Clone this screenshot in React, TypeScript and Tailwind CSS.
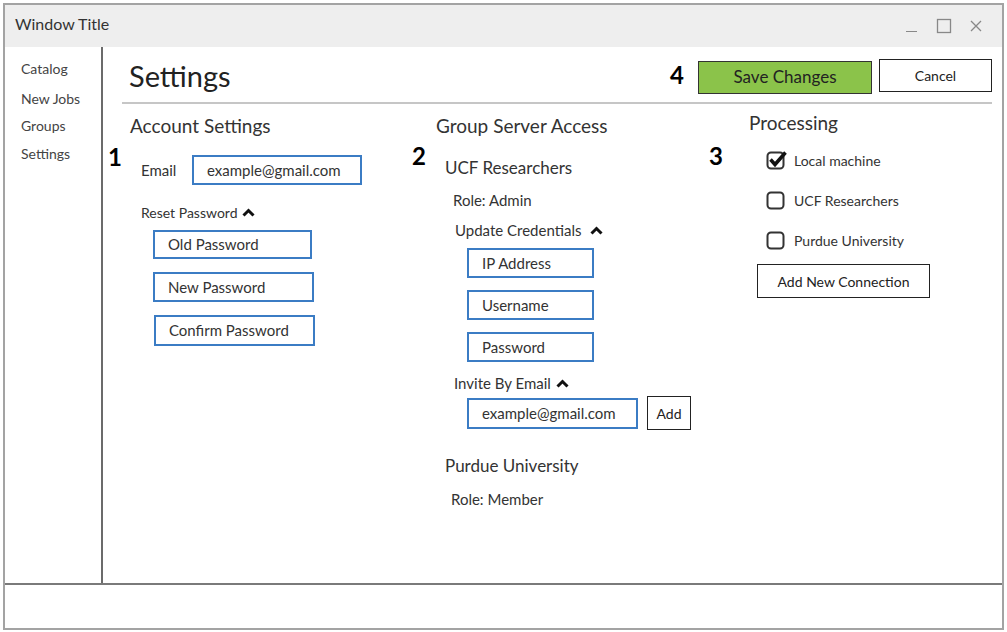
import React from 'react';

const font = { fontFamily: 'Lato, "Open Sans", sans-serif' };

function Chevron({ gap = 'ml-[5px]' }: { gap?: string }) {
  return (
    <svg width="13" height="9" viewBox="0 0 13 9" className={`${gap} inline-block`}>
      <polyline points="1.5,7.5 6.5,2.5 11.5,7.5" fill="none" stroke="#111" strokeWidth="3" />
    </svg>
  );
}

function Field({ label, w, h = 'h-[29px]' }: { label: string; w: string; h?: string }) {
  return (
    <div className={`${w} ${h} border-2 border-[#3b7cc4] flex items-center pl-[13px] text-[15px] text-[#333]`}>
      {label}
    </div>
  );
}

function Check({ checked, label }: { checked?: boolean; label: string }) {
  return (
    <div className="flex items-center h-[20px]">
      <svg width="22" height="22" viewBox="0 0 22 22" className="-ml-[1px]">
        <rect x="1.5" y="3.5" width="16" height="16" rx="3.5" fill="none" stroke="#333" strokeWidth="2" />
        {checked && (
          <polyline points="4.5,10.5 9,15.5 19.5,3.5" fill="none" stroke="#111" strokeWidth="3.5" strokeLinejoin="miter" />
        )}
      </svg>
      <span className="ml-[6px] text-[14px] text-[#333]">{label}</span>
    </div>
  );
}

function Num({ n }: { n: string }) {
  return <span className="text-[24px] font-bold leading-none text-black">{n}</span>;
}

export default function App() {
  return (
    <div style={font} className="w-[1007px] h-[632px] bg-white pt-[3px] pl-[3px]">
      <div className="w-[1001px] h-[627px] border-2 border-[#a3a3a3] flex flex-col">
        {/* title bar */}
        <div className="h-[42px] bg-[#eeeeee] flex items-center justify-between pl-[10px] pr-[20px] pb-[4px] shrink-0">
          <span className="text-[16px] text-[#333]">Window Title</span>
          <div className="flex items-center gap-[18px] mt-[4px]">
            <svg width="12" height="14" viewBox="0 0 12 14"><line x1="0" y1="12.5" x2="11" y2="12.5" stroke="#888" strokeWidth="1" /></svg>
            <svg width="16" height="16" viewBox="0 0 16 16"><rect x="1.5" y="1.5" width="13" height="13" fill="none" stroke="#888" strokeWidth="1.3" /></svg>
            <svg width="12" height="12" viewBox="0 0 12 12"><path d="M1 1L11 11M11 1L1 11" stroke="#888" strokeWidth="1.3" /></svg>
          </div>
        </div>

        {/* body */}
        <div className="flex h-[536px] shrink-0">
          <nav className="w-[98px] border-r-2 border-[#6b6b6b] pl-[16px] pt-[12px] text-[14px] text-[#444] flex flex-col">
            <span className="h-[28px] leading-[20px]">Catalog</span>
            <span className="h-[27px] leading-[20px] mt-[2px]">New Jobs</span>
            <span className="h-[28px] leading-[20px]">Groups</span>
            <span className="h-[28px] leading-[20px]">Settings</span>
          </nav>

          <main className="flex-1 pl-[19px] pr-[10px]">
            <div className="h-[57px] border-b-2 border-[#c6c6c6] flex items-center justify-between pl-[7px]">
              <h1 className="text-[29px] text-[#222] mt-[3px]">Settings</h1>
              <div className="flex items-center">
                <span className="mt-[3px]"><Num n="4" /></span>
                <button className="ml-[14px] w-[174px] h-[33px] bg-[#8bc34a] border border-[#333] text-[17px] text-[#222] mt-[5px]">
                  Save Changes
                </button>
                <button className="ml-[7px] w-[113px] h-[33px] bg-white border border-[#222] text-[14px] text-[#222] mt-[1px]">
                  Cancel
                </button>
              </div>
            </div>

            <div className="flex -ml-[12px]">
              {/* column 1 */}
              <section className="w-[303px] flex flex-col">
                <h2 className="pl-[20px] mt-[10px] h-[24px] leading-[24px] text-[19px] text-[#333]">Account Settings</h2>
                <div className="flex mt-[8px]">
                  <div className="w-[31px] -mt-[1px] -ml-[2px] pr-[2px]"><Num n="1" /></div>
                  <div className="flex flex-col ml-[2px]">
                    <div className="flex items-center mt-[9px]">
                      <span className="text-[15px] text-[#333] w-[51px]">Email</span>
                      <Field label="example@gmail.com" w="w-[170px]" h="h-[30px]" />
                    </div>
                    <div className="flex items-center mt-[17px] h-[20px] text-[14px] text-[#333]">
                      Reset Password <Chevron />
                    </div>
                    <div className="flex flex-col pl-[12px] mt-[8px] gap-[13px]">
                      <Field label="Old Password" w="w-[159px]" />
                      <Field label="New Password" w="w-[161px]" h="h-[30px]" />
                      <div className="ml-[1px]"><Field label="Confirm Password" w="w-[161px]" h="h-[31px]" /></div>
                    </div>
                  </div>
                </div>
              </section>

              {/* column 2 */}
              <section className="w-[298px] flex flex-col">
                <h2 className="pl-[23px] mt-[10px] h-[24px] leading-[24px] text-[19px] text-[#333]">Group Server Access</h2>
                <div className="flex mt-[7px]">
                  <div className="w-[32px] -mt-[1px] -ml-[1px] pr-[1px]"><Num n="2" /></div>
                  <div className="flex flex-col text-[#333] ml-[1px]">
                    <span className="text-[17px] h-[22px] leading-[22px] mt-[12px]">UCF Researchers</span>
                    <span className="text-[15px] h-[20px] leading-[20px] mt-[11px] ml-[8px]">Role: Admin</span>
                    <span className="text-[15px] h-[20px] leading-[20px] mt-[10px] ml-[10px] flex items-center">
                      Update Credentials <Chevron gap="ml-[9px]" />
                    </span>
                    <div className="flex flex-col ml-[22px] mt-[8px] gap-[12px]">
                      <Field label="IP Address" w="w-[127px]" h="h-[30px]" />
                      <Field label="Username" w="w-[127px]" h="h-[30px]" />
                      <Field label="Password" w="w-[127px]" h="h-[30px]" />
                    </div>
                    <span className="text-[15px] h-[20px] leading-[20px] mt-[11px] ml-[9px] flex items-center">
                      Invite By Email <Chevron />
                    </span>
                    <div className="flex items-center ml-[22px] mt-[3px]">
                      <Field label="example@gmail.com" w="w-[171px]" h="h-[31px]" />
                      <button className="ml-[9px] w-[44px] h-[34px] border border-[#222] bg-white text-[14px] text-[#222]">Add</button>
                    </div>
                    <span className="text-[17px] h-[22px] leading-[22px] mt-[25px]">Purdue University</span>
                    <span className="text-[15px] h-[20px] leading-[20px] mt-[12px] ml-[6px]">Role: Member</span>
                  </div>
                </div>
              </section>

              {/* column 3 */}
              <section className="flex-1 flex flex-col">
                <h2 className="pl-[38px] mt-[7px] h-[24px] leading-[24px] text-[19px] text-[#333]">Processing</h2>
                <div className="flex mt-[10px]">
                  <div className="w-[46px] -mt-[1px] -ml-[2px] pr-[2px]"><Num n="3" /></div>
                  <div className="flex flex-col ml-[2px]">
                    <div className="ml-[10px] mt-[5px] flex flex-col gap-[20px]">
                      <Check checked label="Local machine" />
                      <Check label="UCF Researchers" />
                      <Check label="Purdue University" />
                    </div>
                    <button className="mt-[14px] w-[173px] h-[34px] border border-[#222] bg-white text-[14px] text-[#222]">
                      Add New Connection
                    </button>
                  </div>
                </div>
              </section>
            </div>
          </main>
        </div>

        {/* footer */}
        <div className="flex-1 border-t-2 border-[#7a7a7a]" />
      </div>
    </div>
  );
}
